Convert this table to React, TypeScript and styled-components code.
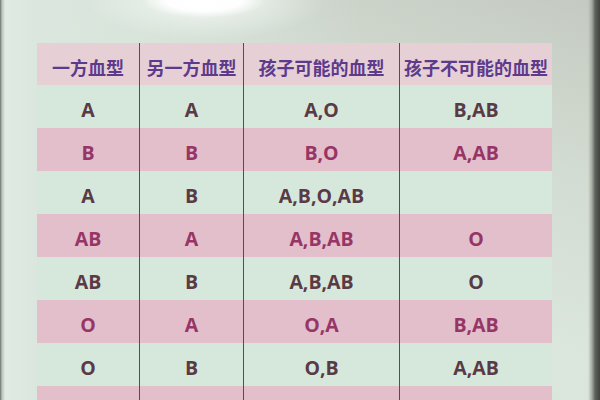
import React from 'react';
import styled, { createGlobalStyle } from 'styled-components';

const GlobalStyle = createGlobalStyle`
  html, body {
    margin: 0;
    padding: 0;
  }
  body {
    font-family: 'Noto Sans', 'Noto Sans CJK SC', sans-serif;
  }
`;

const Board = styled.div`
  width: 600px;
  height: 400px;
  overflow: hidden;
  box-sizing: border-box;
  padding: 43px 0 0 37px;
  background:
    radial-gradient(ellipse 62px 18px at 204px 0px, rgba(255,255,255,1) 0%, rgba(255,255,255,0.95) 60%, rgba(255,255,255,0) 100%),
    radial-gradient(ellipse 120px 40px at 205px 0px, rgba(245,250,246,0.9) 0%, rgba(245,250,246,0) 100%),
    linear-gradient(90deg, #6e736c 0px, #b9c3bb 2px, #e0eae2 5px, #dbe7de 35px, rgba(219,231,222,0) 60%),
    linear-gradient(90deg, rgba(0,0,0,0) 588px, #a4a99f 592px, #5f635d 595px, #3f423e 600px),
    linear-gradient(200deg, #c4cac1 0%, #d3dcd2 30%, #dbe6dd 60%, #d6e3d9 100%);
`;

const Table = styled.div`
  display: grid;
  grid-template-columns: 102px 104px 156px 153px;
  grid-template-rows: 42px;
  grid-auto-rows: 43px;
  width: 515px;
`;

const Cell = styled.div<{ $tone: 'head' | 'pink' | 'green'; $divider: boolean }>`
  display: flex;
  align-items: center;
  justify-content: center;
  padding-top: 5px;
  box-sizing: border-box;
  white-space: nowrap;
  border-left: ${(p) => (p.$divider ? '1px solid #4f514f' : 'none')};
  background: ${(p) =>
    p.$tone === 'head' ? '#e6cfd5' : p.$tone === 'pink' ? '#e2bfcb' : '#d6e8dc'};
  color: ${(p) =>
    p.$tone === 'head' ? '#5d3a8c' : p.$tone === 'pink' ? '#963566' : '#5a3a44'};
  font-size: ${(p) => (p.$tone === 'head' ? '18px' : '19.5px')};
  font-weight: 700;
  font-family: ${(p) =>
    p.$tone === 'head'
      ? "'Noto Sans CJK SC', 'Noto Sans', sans-serif"
      : "'Open Sans', 'Noto Sans', sans-serif"};
`;

const header = ['一方血型', '另一方血型', '孩子可能的血型', '孩子不可能的血型'];

const rows: string[][] = [
  ['A', 'A', 'A,O', 'B,AB'],
  ['B', 'B', 'B,O', 'A,AB'],
  ['A', 'B', 'A,B,O,AB', ''],
  ['AB', 'A', 'A,B,AB', 'O'],
  ['AB', 'B', 'A,B,AB', 'O'],
  ['O', 'A', 'O,A', 'B,AB'],
  ['O', 'B', 'O,B', 'A,AB'],
  ['O', 'AB', 'A,B', 'O,AB'],
];

const App = () => {
  return (
    <>
      <GlobalStyle />
      <Board>
        <Table>
          {header.map((h, i) => (
            <Cell key={'h' + i} $tone="head" $divider={i > 0}>
              {h}
            </Cell>
          ))}
          {rows.map((row, r) =>
            row.map((v, c) => (
              <Cell key={r + '-' + c} $tone={r % 2 === 0 ? 'green' : 'pink'} $divider={c > 0}>
                {v}
              </Cell>
            ))
          )}
        </Table>
      </Board>
    </>
  );
};

export default App;
